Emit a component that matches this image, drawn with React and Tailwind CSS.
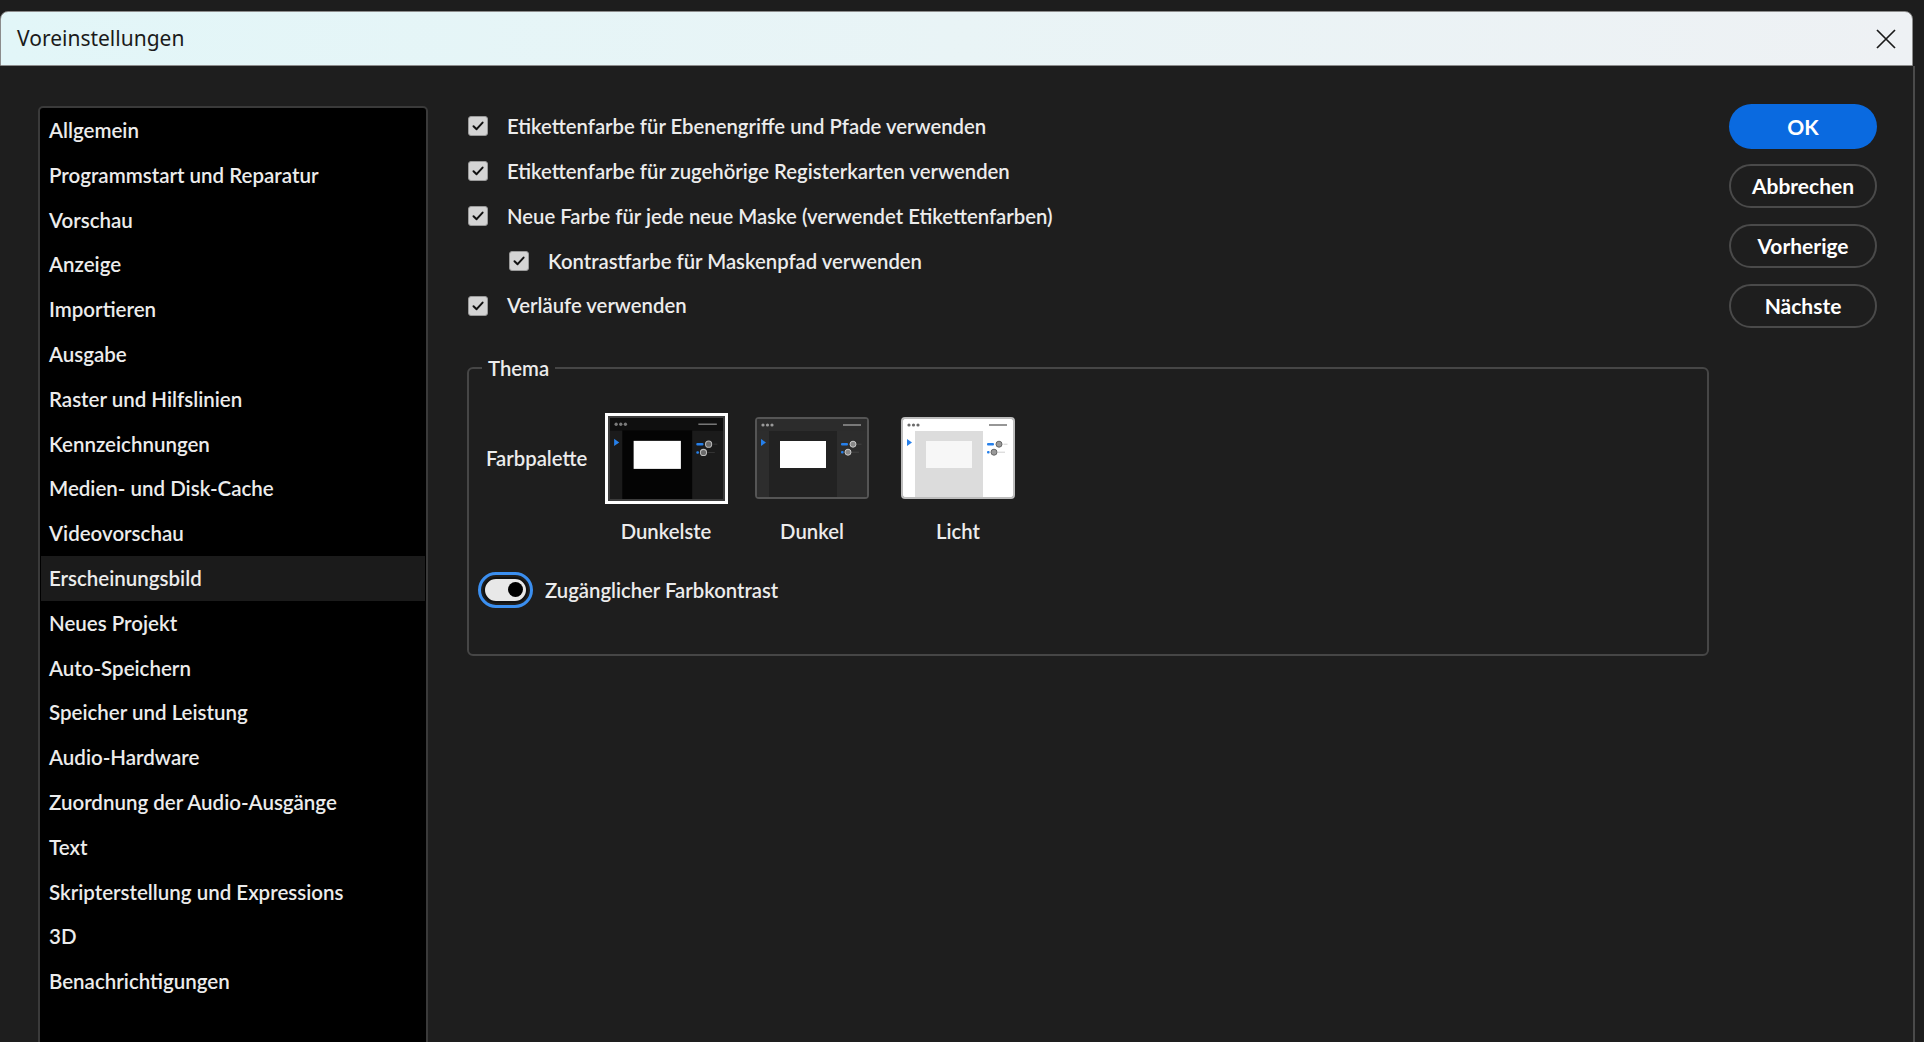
import React from "react";

const items = [
  "Allgemein",
  "Programmstart und Reparatur",
  "Vorschau",
  "Anzeige",
  "Importieren",
  "Ausgabe",
  "Raster und Hilfslinien",
  "Kennzeichnungen",
  "Medien- und Disk-Cache",
  "Videovorschau",
  "Erscheinungsbild",
  "Neues Projekt",
  "Auto-Speichern",
  "Speicher und Leistung",
  "Audio-Hardware",
  "Zuordnung der Audio-Ausgänge",
  "Text",
  "Skripterstellung und Expressions",
  "3D",
  "Benachrichtigungen",
];

const checks = [
  { label: "Etikettenfarbe für Ebenengriffe und Pfade verwenden", indent: false },
  { label: "Etikettenfarbe für zugehörige Registerkarten verwenden", indent: false },
  { label: "Neue Farbe für jede neue Maske (verwendet Etikettenfarben)", indent: false },
  { label: "Kontrastfarbe für Maskenpfad verwenden", indent: true },
  { label: "Verläufe verwenden", indent: false },
];

function CheckBox() {
  return (
    <div className="w-[20px] h-[20px] rounded-[3px] bg-[#d4d4d4] border border-[#9a9a9a] flex items-center justify-center">
      <svg width="14" height="14" viewBox="0 0 14 14">
        <path d="M2.5 7.2 L5.6 10.2 L11.6 3.6" fill="none" stroke="#111" strokeWidth="2" strokeLinecap="round" strokeLinejoin="round" />
      </svg>
    </div>
  );
}

function ThemeArt({ c }) {
  return (
    <svg width="100%" height="100%" viewBox="0 0 110 78" preserveAspectRatio="none" className="block">
      <rect x="0" y="0" width="110" height="78" fill={c.main} />
      <rect x="0" y="0" width="110" height="12" fill={c.bar} />
      <circle cx="6" cy="6" r="1.6" fill={c.dot} />
      <circle cx="10.5" cy="6" r="1.6" fill={c.dot} />
      <circle cx="15" cy="6" r="1.6" fill={c.dot} />
      <rect x="86" y="5.3" width="18" height="1.4" fill={c.dot} />
      <rect x="0" y="12" width="12" height="66" fill={c.strip} />
      <polygon points="4,20 4,27 9,23.5" fill="#2680eb" />
      <rect x="80" y="12" width="30" height="66" fill={c.panel} />
      <rect x="23" y="22" width="46" height="27" fill={c.card} />
      <rect x="84" y="24" width="7" height="2.4" rx="1" fill="#2680eb" />
      <circle cx="96" cy="25.2" r="3" fill={c.knob} stroke={c.knobStroke} strokeWidth="1" />
      <rect x="100.5" y="24.7" width="4" height="1" fill={c.faint} />
      <rect x="84" y="32" width="2.6" height="2.4" rx="1" fill="#2680eb" />
      <circle cx="91" cy="33.2" r="3" fill={c.knob} stroke={c.knobStroke} strokeWidth="1" />
      <rect x="95" y="32.7" width="7" height="1" fill={c.faint} />
    </svg>
  );
}

const darkest = { main: "#040404", bar: "#0f0f0f", strip: "#1b1b1b", panel: "#1b1b1b", card: "#ffffff", dot: "#7a7a7a", knob: "#6a6a6a", knobStroke: "#bbbbbb", faint: "#333333" };
const dark = { main: "#222222", bar: "#2c2c2c", strip: "#2d2d2d", panel: "#2d2d2d", card: "#ffffff", dot: "#9a9a9a", knob: "#888888", knobStroke: "#cccccc", faint: "#444444" };
const light = { main: "#dcdcdc", bar: "#ffffff", strip: "#ffffff", panel: "#ffffff", card: "#f7f7f7", dot: "#6a6a6a", knob: "#999999", knobStroke: "#666666", faint: "#d0d0d0" };

export default function App() {
  const font = { fontFamily: "Lato, 'Noto Sans', sans-serif" };
  return (
    <div className="w-[1924px] h-[1042px] overflow-hidden bg-[#1d1d1d] pt-[11px]" style={font}>
      <div className="w-[1915px] flex flex-col">
        {/* Title bar */}
        <div className="h-[55px] rounded-t-[8px] border-t border-l border-r border-b border-[#8c8c8c] bg-gradient-to-r from-[#e2f6f8] via-[#e9f4f6] to-[#eef1f4] flex items-center justify-between pl-[16px] pr-[16px] mr-[2px]">
          <span className="text-[21px] text-[#1b1b1b]" style={{ fontFamily: "'Noto Sans', 'Open Sans', sans-serif" }}>
            Voreinstellungen
          </span>
          <svg width="20" height="20" viewBox="0 0 20 20">
            <path d="M1 1 L19 19 M19 1 L1 19" stroke="#1a1a1a" strokeWidth="1.7" fill="none" />
          </svg>
        </div>

        {/* Body */}
        <div className="h-[976px] bg-[#1e1e1e] border-r-[2px] border-[#4a4a4a] flex pt-[38px] pl-[38px] pr-[36px] text-[#ececec] text-[20.5px] font-semibold">
          {/* Sidebar */}
          <div className="w-[390px] h-[960px] mt-[2px] shrink-0 bg-black border-2 border-[#3a3a3a] rounded-[5px] px-[1px] flex flex-col">
            {items.map((it) => (
              <div
                key={it}
                className={
                  "h-[44.8px] shrink-0 flex items-center pl-[8px] " +
                  (it === "Erscheinungsbild" ? "bg-[#1b1b1b]" : "")
                }
              >
                {it}
              </div>
            ))}
          </div>

          {/* Main */}
          <div className="w-[1242px] ml-[39px] shrink-0 flex flex-col text-[20.3px]">
            {checks.map((c) => (
              <div key={c.label} className={"h-[44.8px] flex items-center gap-[19px] " + (c.indent ? "pl-[42px]" : "pl-[1px]")}>
                <CheckBox />
                <span>{c.label}</span>
              </div>
            ))}

            <fieldset className="mt-[27px] border-2 border-[#464646] rounded-[6px] pl-[17px] pr-[16px] pb-[46px]">
              <legend className="-ml-[4px] px-[6px] leading-[26px]">Thema</legend>

              <div className="flex items-start pt-[32px]">
                <div className="w-[107px] h-[91px] flex items-center">Farbpalette</div>
                {[
                  { name: "Dunkelste", c: darkest, sel: true },
                  { name: "Dunkel", c: dark, sel: false },
                  { name: "Licht", c: light, sel: false },
                ].map((t) => (
                  <div key={t.name} className="w-[146px] flex flex-col items-center">
                    <div className="h-[91px] flex items-center">
                      {t.sel ? (
                        <div className="w-[123px] h-[91px] border-[3px] border-white bg-[#3c3c3c] p-[2px]">
                          <ThemeArt c={t.c} />
                        </div>
                      ) : (
                        <div className={"w-[114px] h-[82px] border-2 rounded-[4px] overflow-hidden " + (t.name === "Licht" ? "border-[#bdbdbd]" : "border-[#555555]")}>
                          <ThemeArt c={t.c} />
                        </div>
                      )}
                    </div>
                    <div className="mt-[14px] leading-[26px]">{t.name}</div>
                  </div>
                ))}
              </div>

              <div className="flex items-center mt-[28px] -ml-[8px] gap-[12px]">
                <div className="w-[55px] h-[36px] rounded-full border-[3px] border-[#3b8ff0] p-[2px] flex">
                  <div className="flex-1 rounded-full bg-[#e8e8e8] border-2 border-[#111] flex items-center justify-end pr-[3px]">
                    <div className="w-[15px] h-[15px] rounded-full bg-black" />
                  </div>
                </div>
                <span>Zugänglicher Farbkontrast</span>
              </div>
            </fieldset>
          </div>

          {/* Buttons */}
          <div className="w-[148px] ml-[20px] shrink-0 flex flex-col gap-[16px] font-bold">
            <button className="h-[45px] rounded-full bg-[#0a6ae0] text-white text-[21px]">OK</button>
            <button className="h-[44px] -mt-[1px] rounded-full border-2 border-[#4a4a4a] text-white text-[21px]">Abbrechen</button>
            <button className="h-[44px] rounded-full border-2 border-[#4a4a4a] text-white text-[21px]">Vorherige</button>
            <button className="h-[44px] rounded-full border-2 border-[#4a4a4a] text-white text-[21px]">Nächste</button>
          </div>
        </div>
      </div>
    </div>
  );
}
